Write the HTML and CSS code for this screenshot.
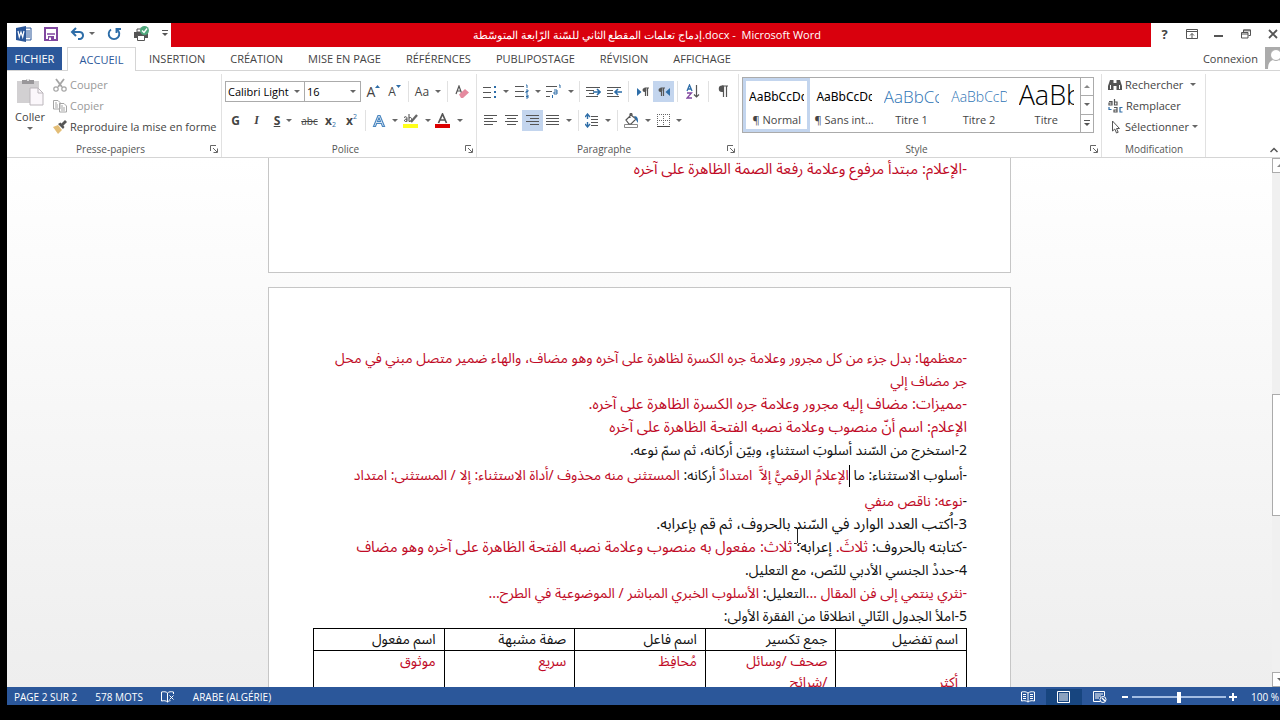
FILE: index.html
```html
<!DOCTYPE html>
<html lang="fr">
<head>
<meta charset="UTF-8">
<meta name="viewport" content="width=device-width, initial-scale=1.0">
<title>Microsoft Word</title>
<link rel="stylesheet" href="styles.css">
</head>
<body>
<div class="window">

    <!-- Title bar -->
    <header class="titlebar">
        <div class="quick-access">
            <svg class="word-logo" width="16" height="16" viewBox="0 0 16 16"><path d="M8 2h7v12H8z" fill="#fff" stroke="#2b579a"/><path d="M10 5h4M10 7h4M10 9h4M10 11h4" stroke="#2b579a"/><path d="M0 2l10-2v16L0 14z" fill="#2b579a"/><path d="M2 5l1.300 6 1.700-5 1.700 5L8 5" fill="none" stroke="#fff" stroke-width="1.200"/></svg>
            <button aria-label="Enregistrer"><svg width="14" height="14" viewBox="0 0 14 14"><path d="M1 1h12v12H1z" fill="#fff" stroke="#80479f" stroke-width="2"/><path d="M3 7h8" stroke="#80479f" stroke-width="1.500"/><path d="M4 9h6v4H4z" fill="#80479f"/><path d="M5 10.500h2V13H5z" fill="#fff"/></svg></button>
            <button class="undo" aria-label="Annuler"><svg width="15" height="13" viewBox="0 0 15 13"><path d="M2 5h7a3.500 3.500 0 0 1 1 7H8M6 1L2 5l4 4" fill="none" stroke="#2d6da8" stroke-width="2"/></svg><i class="drop"></i></button>
            <button aria-label="Répéter"><svg width="14" height="14" viewBox="0 0 14 14"><path d="M4 2.500a5.300 5.300 0 1 0 6 0M9.500 6V2H14" fill="none" stroke="#2d6da8" stroke-width="1.900"/></svg></button>
            <button aria-label="Impression rapide"><svg width="17" height="16" viewBox="0 0 17 16"><path d="M1 6h14v6H1z" fill="#555"/><path d="M4 3h5v3H4z" fill="#fff" stroke="#555"/><path d="M4.500 9.500h7v5h-7z" fill="#fff" stroke="#555"/><circle cx="11.500" cy="4.500" r="4.500" fill="#4fa87c"/><path d="M9 4.500l2 2 3-4" fill="none" stroke="#fff" stroke-width="1.300"/></svg></button>
            <button aria-label="Personnaliser"><svg width="6" height="7" viewBox="0 0 6 7"><path d="M0 .5h6" stroke="#555"/><path d="M0 3h6L3 6z" fill="#555"/></svg></button>
        </div>
        <h1 class="doc-title">إدماج تعلمات المقطع الثاني للسّنة الرّابعة المتوسّطة.docx -&nbsp; Microsoft Word</h1>
        <div class="window-controls">
            <button aria-label="Aide"><b>?</b></button>
            <button aria-label="Options du ruban"><svg width="12" height="10" viewBox="0 0 12 10"><path d="M.5.500h11v9H.5zM.5 2.500h11" fill="none" stroke="#555"/><path d="M6 9V4.500M4 6.500l2-2 2 2" fill="none" stroke="#555"/></svg></button>
            <button aria-label="Réduire"><svg width="9" height="10" viewBox="0 0 9 10"><path d="M0 7h9" stroke="#555" stroke-width="2"/></svg></button>
            <button aria-label="Restaurer"><svg width="10" height="10" viewBox="0 0 10 10"><path d="M.5 3.500h6.500v5.500H.5zM.5 5h6.500M2.500 3V.8h7v5.700H7.500M2.500 1.800h7" fill="none" stroke="#555"/></svg></button>
            <button aria-label="Fermer"><svg width="10" height="10" viewBox="0 0 10 10"><path d="M1 1l8 8M9 1L1 9" stroke="#555" stroke-width="1.800"/></svg></button>
        </div>
    </header>

    <!-- Tabs -->
    <nav class="tabs">
        <button class="file-tab">FICHIER</button>
        <button class="active">ACCUEIL</button>
        <button>INSERTION</button>
        <button>CRÉATION</button>
        <button>MISE EN PAGE</button>
        <button>RÉFÉRENCES</button>
        <button>PUBLIPOSTAGE</button>
        <button>RÉVISION</button>
        <button>AFFICHAGE</button>
        <a class="login" href="#">Connexion</a>
        <svg class="avatar" width="22" height="22" viewBox="0 0 22 22"><path d="M0 0h22v22H0z" fill="#ababab"/><path d="M3 22c0-6 2-8 5-9h6c3 1 5 3 5 9z" fill="#fff"/><circle cx="11" cy="8" r="5.500" fill="#fff" stroke="#ababab"/></svg>
    </nav>

    <!-- Ribbon -->
    <div class="ribbon">
        <section class="group clipboard">
            <div class="group-body">
                <button class="paste"><svg width="28" height="29" viewBox="0 0 28 29"><path d="M1 4h22v22H1z" fill="#d2d0d2"/><path d="M6 3h4a2.500 2.500 0 0 1 4 0h4v4H6z" fill="#99979a"/><circle cx="12" cy="3" r="1" fill="#fff"/><path d="M14 11h8l5 5v12H14z" fill="#fbf7fb" stroke="#bbb6bb"/><path d="M22 11v5h5" fill="none" stroke="#bbb6bb"/></svg>Coller<i class="drop"></i></button>
                <div class="stack">
                    <button class="disabled"><svg width="14" height="14" viewBox="0 0 14 14"><path d="M3 1l6 8M11 1L5 9" stroke="#a5a5a5" stroke-width="1.800"/><circle cx="3" cy="11" r="2.200" fill="none" stroke="#a5a5a5" stroke-width="1.200"/><circle cx="11" cy="11" r="2.200" fill="none" stroke="#a5a5a5" stroke-width="1.200"/></svg>Couper</button>
                    <button class="disabled"><svg width="14" height="14" viewBox="0 0 14 14"><path d="M.5 1.500H5l2 2V10H.5zM6.500 4.500H11l2.500 2.500v6h-7z" fill="#fff" stroke="#a5a5a5"/><path d="M2 4h2M2 6h3M2 8h3M8 7h2M8 9h4M8 11h4" stroke="#a5a5a5"/></svg>Copier</button>
                    <button><svg width="14" height="14" viewBox="0 0 14 14"><path d="M0 7l5-2 4 5-4 4z" fill="#e3bd76"/><path d="M5 4l5 5 1.500-2-4-4.500z" fill="#555"/><path d="M9 5l4-4" stroke="#555" stroke-width="2.800"/></svg>Reproduire la mise en forme</button>
                </div>
            </div>
            <footer><span>Presse-papiers</span><svg class="launcher" width="8" height="8" viewBox="0 0 8 8"><path d="M.5 6V.5H6M3 3l4 4M7.500 3.500v4h-4" fill="none" stroke="#666"/></svg></footer>
        </section>

        <section class="group font">
            <div class="group-body rows">
                <div class="row">
                    <span class="combo name"><select aria-label="Police"><option>Calibri Light</option></select><i class="drop"></i></span>
                    <span class="combo size"><select aria-label="Taille"><option>16</option></select><i class="drop"></i></span>
                    <button class="tool"><span class="big">A</span><svg class="tick" width="5" height="10" viewBox="0 0 5 10"><path d="M0 3l2.500-3L5 3z" fill="#2d6da8"/></svg></button>
                    <button class="tool">A<svg class="tick" width="5" height="10" viewBox="0 0 5 10"><path d="M0 0h5L2.500 3z" fill="#2d6da8"/></svg></button>
                    <i class="sep"></i>
                    <button class="tool wide">Aa<i class="drop"></i></button>
                    <i class="sep"></i>
                    <button class="tool" aria-label="Effacer"><svg width="14" height="14" viewBox="0 0 14 14"><path d="M1 9l3-8 2.500 7M2 6h3.500" fill="none" stroke="#555" stroke-width="1.200"/><path d="M4 9.500L10 4l4 3.500L8 13H6z" fill="#e58a9f"/></svg></button>
                </div>
                <div class="row">
                    <button class="tool"><b>G</b></button>
                    <button class="tool"><em>I</em></button>
                    <button class="tool wide"><u>S</u><i class="drop"></i></button>
                    <button class="tool"><s>abc</s></button>
                    <button class="tool"><b>x</b><sub>2</sub></button>
                    <button class="tool"><b>x</b><sup>2</sup></button>
                    <i class="sep"></i>
                    <button class="tool wide" aria-label="Effets"><svg width="14" height="14" viewBox="0 0 14 14"><path d="M1.500 12.500L6 1.500h2l4.500 11h-2L9.300 9.300H4.700l-1.200 3.200zM5.500 7.500h3L7 3.800z" fill="#fff" stroke="#4a86c0" stroke-width="1.200"/></svg><i class="drop"></i></button>
                    <button class="tool wide" aria-label="Surlignage"><svg width="16" height="16" viewBox="0 0 16 16"><path d="M0 11h15v4H0z" fill="#ffff1a"/><path d="M1 4.500c2-1.500 3-.5 3 1v3M4 6c-3 0-3 2.500-1.500 2.500L4 8M6 1v7.500M6 5c3-2 4 3 0 3.500" fill="none" stroke="#444"/><path d="M14 2L8 9" stroke="#666" stroke-width="2.300"/></svg><i class="drop"></i></button>
                    <button class="tool wide" aria-label="Couleur"><svg width="16" height="16" viewBox="0 0 16 16"><path d="M0 11h15v4H0z" fill="#dc0000"/><path d="M3.500 10l4-9 4 9M5 7h5" fill="none" stroke="#555" stroke-width="1.700"/></svg><i class="drop"></i></button>
                </div>
            </div>
            <footer><span>Police</span><svg class="launcher" width="8" height="8" viewBox="0 0 8 8"><path d="M.5 6V.5H6M3 3l4 4M7.500 3.500v4h-4" fill="none" stroke="#666"/></svg></footer>
        </section>

        <section class="group paragraph">
            <div class="group-body rows">
                <div class="row">
                    <button class="tool wide" aria-label="Puces"><svg width="14" height="14" viewBox="0 0 14 14"><path d="M0 2.500h8M0 7.500h8M0 12.500h8" stroke="#555"/><path d="M11 1h2v2h-2zM11 6h2v2h-2zM11 11h2v2h-2z" fill="#2d6da8"/></svg><i class="drop"></i></button>
                    <button class="tool wide" aria-label="Numérotation"><svg width="14" height="15" viewBox="0 0 14 15"><path d="M0 2.500h9M0 7.500h9M0 12.500h9" stroke="#555"/><path d="M11 1h1v3M11 6h2v1.500h-2V9h2M11 11h2v3h-2M11 12.500h2" fill="none" stroke="#2d6da8"/></svg><i class="drop"></i></button>
                    <button class="tool wide" aria-label="Liste à plusieurs niveaux"><svg width="16" height="15" viewBox="0 0 16 15"><path d="M0 2.500h11M0 7.500h6M0 12.500h4" stroke="#555"/><path d="M13 1h1v3M8 6h3v4H8V8h3M6.500 11v3" fill="none" stroke="#2d6da8"/></svg><i class="drop"></i></button>
                    <i class="sep"></i>
                    <button class="tool" aria-label="Diminuer le retrait"><svg width="15" height="12" viewBox="0 0 15 12"><path d="M0 1.500h14M0 4.500h8M3 7.500h5M0 10.500h12" stroke="#555"/><path d="M7 6h7M11 3l3 3-3 3" fill="none" stroke="#2d6da8" stroke-width="1.600"/></svg></button>
                    <button class="tool" aria-label="Augmenter le retrait"><svg width="15" height="12" viewBox="0 0 15 12"><path d="M0 1.500h14M0 4.500h6M0 7.500h6M0 10.500h12" stroke="#555"/><path d="M15 6H8M11 3L8 6l3 3" fill="none" stroke="#2d6da8" stroke-width="1.600"/></svg></button>
                    <i class="sep"></i>
                    <button class="tool" aria-label="De gauche à droite"><svg width="12" height="12" viewBox="0 0 12 12"><path d="M0 2l4.500 4L0 10z" fill="#2d6da8"/><path d="M12 2H7.500M8.500 2v8M10.500 2v8" fill="none" stroke="#555" stroke-width="1.200"/><circle cx="7.500" cy="4" r="2" fill="#555"/></svg></button>
                    <button class="tool on" aria-label="De droite à gauche"><svg width="12" height="12" viewBox="0 0 12 12"><path d="M12 2L7.500 6l4.500 4z" fill="#2d6da8"/><path d="M7 2H2.500M3.500 2v8M5.500 2v8" fill="none" stroke="#555" stroke-width="1.200"/><circle cx="2.500" cy="4" r="2" fill="#555"/></svg></button>
                    <i class="sep"></i>
                    <button class="tool sort" aria-label="Trier"><svg width="14" height="15" viewBox="0 0 14 15"><path d="M1 7l2.500-6L6 7M2 5h3" fill="none" stroke="#2d6da8" stroke-width="1.300"/><path d="M1 9h4.500L1 14h5" fill="none" stroke="#80479f" stroke-width="1.300"/><path d="M10.500 1v12M8 10.500l2.500 2.500 2.500-2.500" fill="none" stroke="#555" stroke-width="1.200"/></svg></button>
                    <i class="sep"></i>
                    <button class="tool" aria-label="Afficher tout"><svg width="10" height="13" viewBox="0 0 10 13"><path d="M10 1H4M5.500 1v11M8.500 1v11" fill="none" stroke="#555" stroke-width="1.200"/><path d="M5.500.5H4a3 3 0 0 0 0 6.500h1.500z" fill="#555"/></svg></button>
                </div>
                <div class="row">
                    <button class="tool" aria-label="Aligner à gauche"><svg width="14" height="11" viewBox="0 0 14 11"><path d="M0 .5h13M0 3.500h9M0 6.500h13M0 9.500h9" stroke="#555"/></svg></button>
                    <button class="tool" aria-label="Centrer"><svg width="14" height="11" viewBox="0 0 14 11"><path d="M0 .5h13M2 3.500h9M0 6.500h13M2 9.500h9" stroke="#555"/></svg></button>
                    <button class="tool on" aria-label="Aligner à droite"><svg width="14" height="11" viewBox="0 0 14 11"><path d="M0 .5h13M4 3.500h9M0 6.500h13M4 9.500h9" stroke="#555"/></svg></button>
                    <button class="tool wide" aria-label="Justifier"><svg width="14" height="11" viewBox="0 0 14 11"><path d="M0 .5h13M0 3.500h13M0 6.500h13M0 9.500h13" stroke="#555"/></svg><i class="drop"></i></button>
                    <i class="sep"></i>
                    <button class="tool wide" aria-label="Interligne"><svg width="14" height="15" viewBox="0 0 14 15"><path d="M6 3.500h7M6 6.500h7M6 9.500h7M6 12.500h7" stroke="#555"/><path d="M2.500 1v5M0 4l2.500-3L5 4M2.500 9v5M0 11l2.500 3L5 11" fill="none" stroke="#2d6da8" stroke-width="1.400"/></svg><i class="drop"></i></button>
                    <i class="sep"></i>
                    <button class="tool wide" aria-label="Trame de fond"><svg width="15" height="15" viewBox="0 0 15 15"><path d="M.5 11.500h13v3H.5z" fill="#fff" stroke="#888"/><path d="M2 7l5-5 5 4-5 5H5zM6 5V1.500a1 1 0 0 1 2 0V4" fill="none" stroke="#555" stroke-width="1.200"/><path d="M10 3c4 0 4 3 4 7l-2-3z" fill="#2d6da8"/></svg><i class="drop"></i></button>
                    <button class="tool wide" aria-label="Bordures"><svg width="13" height="13" viewBox="0 0 13 13"><path d="M.5 0v12M6.500 0v12M12.500 0v12M0 .5h13M0 6.500h13" fill="none" stroke="#666" stroke-dasharray="1 1"/><path d="M0 12.500h13" stroke="#444"/></svg><i class="drop"></i></button>
                </div>
            </div>
            <footer><span>Paragraphe</span><svg class="launcher" width="8" height="8" viewBox="0 0 8 8"><path d="M.5 6V.5H6M3 3l4 4M7.500 3.500v4h-4" fill="none" stroke="#666"/></svg></footer>
        </section>

        <section class="group styles">
            <div class="gallery">
                <button class="style selected"><span class="preview">AaBbCcDc</span>¶ Normal</button>
                <button class="style"><span class="preview">AaBbCcDc</span>¶ Sans int...</button>
                <button class="style"><span class="preview heading1">AaBbCc</span>Titre 1</button>
                <button class="style"><span class="preview heading2">AaBbCcD</span>Titre 2</button>
                <button class="style"><span class="preview title">AaBb</span>Titre</button>
                <div class="gallery-scroll">
                    <button aria-label="Précédent"><i class="drop up"></i></button>
                    <button aria-label="Suivant"><i class="drop"></i></button>
                    <button aria-label="Autres"><svg width="6" height="7" viewBox="0 0 6 7"><path d="M0 .5h6" stroke="#555"/><path d="M0 3h6L3 6z" fill="#555"/></svg></button>
                </div>
            </div>
            <footer><span>Style</span><svg class="launcher" width="8" height="8" viewBox="0 0 8 8"><path d="M.5 6V.5H6M3 3l4 4M7.500 3.500v4h-4" fill="none" stroke="#666"/></svg></footer>
        </section>

        <section class="group editing">
            <div class="group-body">
                <div class="stack">
                    <button><svg width="14" height="14" viewBox="0 0 14 14"><path d="M2 2h3.500v3H8.500V2H12l2 6v4H8.500V8h-3v4H0V8z" fill="#555"/><path d="M2.500 7v4M11.500 7v4" stroke="#fff"/></svg>Rechercher<i class="drop find"></i></button>
                    <button><svg width="15" height="14" viewBox="0 0 15 14"><path d="M1 2.500h3V6H1V4h3M6.500 0v6H9V3H6.500" fill="none" stroke="#555" stroke-width="1.200"/><path d="M1 8v2.500h2.500" fill="none" stroke="#2d6da8" stroke-width="1.200"/><path d="M6 8.500h3V13H6v-2h3" fill="none" stroke="#555" stroke-width="1.200"/><path d="M14.500 8.500H12V13h2.500" fill="none" stroke="#2d6da8" stroke-width="1.200"/></svg>Remplacer</button>
                    <button><svg width="14" height="14" viewBox="0 0 14 14"><path d="M4.500 1v10l2.300-2 1.700 4 1.700-.7L8.500 8.500h3z" fill="#fff" stroke="#555"/></svg>Sélectionner<i class="drop"></i></button>
                </div>
            </div>
            <footer><span>Modification</span></footer>
        </section>

        <button class="collapse" aria-label="Réduire le ruban"><svg width="8" height="6" viewBox="0 0 8 6"><path d="M0.500 5L4 1.500 7.500 5" fill="none" stroke="#555" stroke-width="1.500"/></svg></button>
    </div>

    <!-- Document -->
    <main class="workspace">
        <div class="pages" lang="ar" dir="rtl">
            <article class="page first">
                <p class="red">-الإعلام: مبتدأ مرفوع وعلامة رفعة الصمة الظاهرة على آخره</p>
            </article>
            <article class="page">
                <p class="red small">-معظمها: بدل جزء من كل مجرور وعلامة جره الكسرة لظاهرة على آخره وهو مضاف، والهاء ضمير متصل مبني في محل<br>جر مضاف إلي</p>
                <p class="red">-مميزات: مضاف إليه مجرور وعلامة جره الكسرة الظاهرة على آخره.</p>
                <p class="red">الإعلام: اسم أنّ منصوب وعلامة نصبه الفتحة الظاهرة على آخره</p>
                <p class="small">2-استخرج من السّند أسلوبَ استثناءٍ، وبيّن أركانه، ثم سمّ نوعه.</p>
                <p class="tall small">-أسلوب الاستثناء: ما <i class="caret"></i><span class="red">الإعلامُ الرقميُّ إلاَّ&nbsp; امتدادٌ</span> أركانه: <span class="red">المستثنى منه محذوف /أداة الاستثناء: إلا / المستثنى: امتداد</span></p>
                <p class="small">-<span class="red">نوعه: ناقص منفي</span></p>
                <p>3-اُكتب العدد الوارد في السّند بالحروف، ثم قم بإعرابه.</p>
                <p>-كتابته بالحروف: <span class="red">ثلاثَ.</span> إعرابه<span class="pointer-spot">:<svg class="pointer" width="7" height="17" viewBox="0 0 7 17"><path d="M0 .5h2.500l1 1 1-1H7M3.500 1v15M0 16.500h2.500l1-1 1 1H7" fill="none" stroke="#222"/></svg></span> <span class="red">ثلاث: مفعول به منصوب وعلامة نصبه الفتحة الظاهرة على آخره وهو مضاف</span></p>
                <p class="small">4-حددْ الجنسي الأدبي للنّص، مع التعليل.</p>
                <p class="small"><span class="red">-نثري ينتمي إلى فن المقال ...</span>التعليل: <span class="red">الأسلوب الخبري المباشر / الموضوعية في الطرح...</span></p>
                <p class="small">5-املأ الجدول التّالي انطلاقا من الفقرة الأولى:</p>
                <table>
                    <tr><th>اسم تفضيل</th><th>جمع تكسير</th><th>اسم فاعل</th><th>صفة مشبهة</th><th>اسم مفعول</th></tr>
                    <tr class="red"><td><br>أكثر</td><td>صحف /وسائل<br>/شرائح</td><td>مُحافِظ</td><td>سريع</td><td>موثوق</td></tr>
                </table>
            </article>
        </div>
        <div class="scrollbar">
            <button aria-label="Monter"><i class="drop up"></i></button>
            <div class="thumb"></div>
            <button aria-label="Descendre"><i class="drop"></i></button>
        </div>
    </main>

    <!-- Status bar -->
    <footer class="statusbar">
        <span>PAGE 2 SUR 2</span>
        <span>578 MOTS</span>
        <svg width="14" height="12" viewBox="0 0 14 12"><path d="M6.500 2C5 .5 3 .5.500 1v9c2.500-.5 4.500-.5 6 1 1-1 2-1.300 3-1.300M6.500 2v9M6.500 2C8 .5 10 .5 12.500 1v2M8.500 4.500l4 4M12.500 4.500l-4 4" fill="none" stroke="#fff"/></svg>
        <span>ARABE (ALGÉRIE)</span>
        <div class="views">
            <button aria-label="Mode lecture"><svg width="14" height="12" viewBox="0 0 14 12"><path d="M7 2C5 .5 3 .5.500 1v9c2.500-.5 4.500-.5 6.500 1 2-1.500 4-1.500 6.500-1V1C11 .5 9 .5 7 2v9M2 3.500h3M2 5.500h3M2 7.500h3M9 3.500h3M9 5.500h3M9 7.500h3" fill="none" stroke="#fff"/></svg></button>
            <button class="on" aria-label="Page"><svg width="14" height="12" viewBox="0 0 14 12"><path d="M.5.500h12v11H.5zM2 3h9M2 5h9M2 7h9M2 9h9" fill="none" stroke="#fff"/></svg></button>
            <button aria-label="Web"><svg width="14" height="12" viewBox="0 0 14 12"><path d="M7 10.500H.5V.5h11V5M2 3h8M2 5h6M2 7h4" fill="none" stroke="#fff"/><circle cx="10" cy="8.500" r="3" fill="#2b579a" stroke="#fff"/><path d="M9 7l2 2 1 1" stroke="#fff" stroke-width="1.500"/></svg></button>
        </div>
        <div class="zoom">
            <button aria-label="Zoom arrière"><svg width="7" height="8" viewBox="0 0 7 8"><path d="M0 4h6" stroke="#fff" stroke-width="2"/></svg></button>
            <input type="range" min="0" max="100" value="50" aria-label="Zoom">
            <button aria-label="Zoom avant"><svg width="8" height="8" viewBox="0 0 8 8"><path d="M0 4h8M4 0v8" stroke="#fff" stroke-width="2"/></svg></button>
        </div>
        <span class="percent">100 %</span>
    </footer>
</div>
</body>
</html>
```

FILE: styles.css
```css
/* General Styles */
* {
    margin: 0;
    padding: 0;
    box-sizing: border-box;
}

body {
    background: #000;
    font-family: "Open Sans", "Noto Sans", sans-serif;
    font-size: 11px;
    color: #444;
}

.window {
    display: flex;
    flex-direction: column;
    height: 100vh;
    padding: 23px 0 15px 7px;
    overflow: hidden;
}

button {
    display: flex;
    align-items: center;
    justify-content: center;
    border: none;
    background: none;
    font: inherit;
    color: inherit;
    white-space: nowrap;
}

svg {
    flex: none;
}

/* Drop-down arrow */
.drop {
    flex: none;
    border: 3px solid transparent;
    border-top-color: #666;
    border-bottom: none;
}

.drop.up {
    border-top: none;
    border-bottom: 3px solid #888;
}

/* Title bar */
.titlebar {
    display: flex;
    flex: none;
    height: 24px;
    background: #fff;
}

.quick-access {
    display: flex;
    align-items: center;
    gap: 12px;
    width: 164px;
    padding: 0 2px 3px 9px;
}

.quick-access .undo {
    gap: 4px;
}

.doc-title {
    flex: 1;
    padding-right: 28px;
    background: #d9000d;
    color: #fff;
    font-size: 11px;
    font-weight: normal;
    line-height: 24px;
    text-align: center;
}

.window-controls {
    display: flex;
    margin-right: -6px;
    padding-bottom: 3px;
}

.window-controls button {
    width: 27px;
}

.window-controls b {
    font-size: 13px;
}

/* Tabs */
.tabs {
    display: flex;
    flex: none;
    gap: 1px;
    height: 24px;
    background: #fff;
    border-bottom: 1px solid #d5d5d5;
}

.tabs button {
    padding: 0 12px;
}

.tabs .file-tab {
    width: 55px;
    padding: 0;
    margin-right: 4px;
    background: #2b579a;
    color: #fff;
}

.tabs .active {
    width: 69px;
    height: 24px;
    padding: 0;
    background: #fff;
    border: 1px solid #d5d5d5;
    border-bottom: none;
    color: #2b579a;
}

.login {
    margin-left: auto;
    padding-right: 6px;
    line-height: 23px;
    color: #444;
    text-decoration: none;
}

.avatar {
    margin-right: -7px;
}

/* Ribbon */
.ribbon {
    display: flex;
    flex: none;
    height: 87px;
    padding-top: 3px;
    background: #fff;
    border-bottom: 1px solid #d5d5d5;
}

.group {
    display: flex;
    flex-direction: column;
    flex: none;
    height: 83px;
    border-right: 1px solid #e1e1e1;
}

.group-body {
    display: flex;
    flex: 1;
}

.group footer {
    display: flex;
    align-items: center;
    height: 16px;
    padding: 0 3px 0 4px;
    font-size: 10px;
    color: #555;
}

.group footer span {
    flex: 1;
    text-align: center;
}

.clipboard { width: 215px; }
.font { width: 255px; }
.paragraph { width: 262px; }
.editing { width: 104px; }

.styles {
    flex: 1;
    min-width: 0;
}

.paste {
    flex-direction: column;
    justify-content: flex-start;
    gap: 3px;
    width: 46px;
    padding-top: 3px;
}

.stack button {
    gap: 3px;
    height: 21px;
}

.stack .find {
    margin-left: 4px;
}

.stack .disabled {
    color: #999;
}

.rows {
    flex-direction: column;
    gap: 8px;
    padding: 7px 3px 0;
}

.row {
    display: flex;
    height: 21px;
}

.tool {
    width: 21px;
    font-size: 12px;
}

.tool .big {
    font-size: 14px;
}

.tool.wide {
    gap: 6px;
    width: 32px;
}

.tool.sort {
    width: 24px;
}

.tool.on {
    background: #c3d5ee;
}

.tool em {
    font-family: "Liberation Serif", serif;
    font-weight: bold;
}

.tool u {
    font-weight: bold;
}

.tool s {
    font-size: 10px;
}

.tool sub,
.tool sup {
    font-size: 7px;
    color: #2d6da8;
}

.tool sub {
    margin-top: 8px;
}

.tool sup {
    margin-top: -8px;
}

.tick {
    align-self: flex-start;
    margin-top: 4px;
}

.sep {
    width: 1px;
    margin: 0 3px;
    background: #e1e1e1;
}

.combo {
    position: relative;
    display: flex;
    border: 1px solid #ababab;
}

.combo.name {
    width: 80px;
}

.combo.size {
    width: 57px;
    margin: 0 2px 0 -1px;
}

.combo select {
    appearance: none;
    width: 100%;
    padding-left: 2px;
    border: none;
    background: none;
    font: inherit;
    color: #000;
}

.combo .drop {
    position: absolute;
    top: 8px;
    right: 4px;
}

/* Style gallery */
.gallery {
    display: flex;
    flex: 1;
    margin: 3px 7px 8px 3px;
    border: 1px solid #ababab;
}

.style {
    flex: 1 1 0;
    flex-direction: column;
    gap: 2px;
    min-width: 0;
    padding: 0 6px;
}

.style.selected {
    border: 3px solid #c3d5ee;
    padding: 0 3px;
}

.preview {
    width: 100%;
    height: 27px;
    overflow: hidden;
    font-family: "Noto Sans", sans-serif;
    font-size: 12px;
    line-height: 28px;
    text-align: left;
    color: #000;
}

.preview.heading1,
.preview.heading2 {
    font-family: "Open Sans", sans-serif;
    font-weight: 300;
    color: #2e74b5;
}

.preview.heading1 {
    font-size: 17px;
}

.preview.heading2 {
    font-size: 14px;
}

.preview.title {
    font-family: "Open Sans", sans-serif;
    font-size: 27px;
    font-weight: 300;
    line-height: 24px;
}

.gallery-scroll {
    display: flex;
    flex-direction: column;
    width: 13px;
    border-left: 1px solid #ababab;
}

.gallery-scroll button {
    flex: 1;
}

.gallery-scroll button + button {
    border-top: 1px solid #ababab;
}

.editing .stack {
    padding-left: 6px;
}

.collapse {
    align-self: flex-end;
    flex: none;
    width: 74px;
    height: 14px;
    padding-right: 2px;
    justify-content: flex-end;
}

/* Document */
.workspace {
    display: flex;
    flex: 1;
    min-height: 0;
    background: linear-gradient(#fff, #eee);
    overflow: hidden;
}

.pages {
    display: flex;
    flex: 1;
    flex-direction: column;
    align-items: center;
    gap: 14px;
    font-family: "Noto Sans Arabic", "Noto Sans", sans-serif;
    font-size: 15px;
    line-height: 23px;
    color: #111;
}

.page {
    width: 743px;
    padding: 59px 43px 0 44px;
    background: #fff;
    border: 1px solid #c6c6c6;
    white-space: nowrap;
}

.page.first {
    flex: none;
    height: 115px;
    padding-top: 0;
    border-top: none;
}

.page .red {
    color: #c00a26;
}

.page .small {
    font-size: 14px;
}

.page .tall {
    line-height: 28px;
}

.caret {
    display: inline-block;
    width: 1px;
    height: 22px;
    background: #000;
    vertical-align: middle;
}

.pointer-spot {
    position: relative;
}

.pointer {
    position: absolute;
    top: -4px;
    left: -2px;
}

.page table {
    width: 100%;
    table-layout: fixed;
    border-collapse: collapse;
    font-size: 14px;
    line-height: 21px;
}

.page th,
.page td {
    padding: 0 8px;
    border: 1px solid #000;
    font-weight: normal;
    text-align: right;
    vertical-align: top;
}

/* Scrollbar */
.scrollbar {
    display: flex;
    flex-direction: column;
    flex: none;
    width: 15px;
    margin-right: -7px;
    background: #f0f0f0;
}

.scrollbar button {
    height: 15px;
    background: #fff;
    border: 1px solid #ababab;
}

.thumb {
    height: 122px;
    margin: auto 0 156px;
    background: #fff;
    border: 1px solid #ababab;
}

/* Status bar */
.statusbar {
    display: flex;
    align-items: center;
    flex: none;
    gap: 18px;
    height: 18px;
    padding: 2px 1px 0 7px;
    background: #2b579a;
    color: #fff;
    font-size: 10px;
    white-space: nowrap;
}

.views {
    display: flex;
    margin-left: auto;
}

.views button {
    width: 36px;
    height: 16px;
}

.views .on {
    background: #17457f;
}

.zoom {
    display: flex;
    align-items: center;
    gap: 3px;
    margin-left: -14px;
}

.zoom input {
    appearance: none;
    width: 94px;
    height: 11px;
    background: linear-gradient(#a3bde3, #a3bde3) center / 100% 2px no-repeat;
}

.zoom input::-webkit-slider-thumb {
    appearance: none;
    width: 4px;
    height: 11px;
    background: #fff;
}

.percent {
    margin-left: -4px;
}
```
